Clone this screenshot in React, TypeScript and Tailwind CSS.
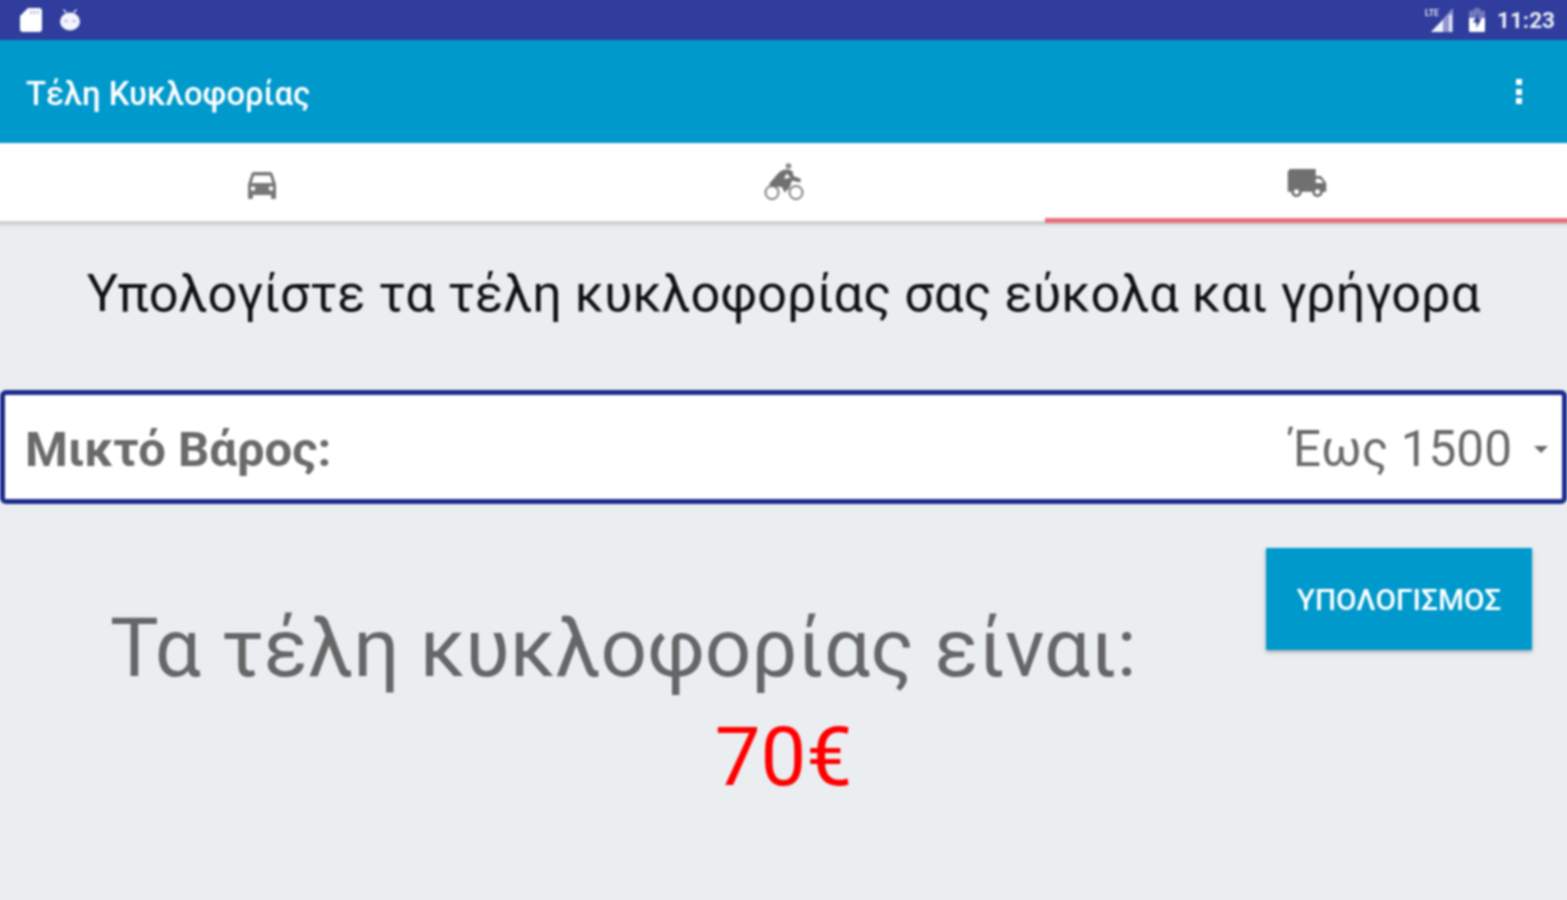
import { MdLocalShipping } from "react-icons/md";

function SdIcon() {
  return (
    <svg viewBox="0 0 22 24" className="h-[24px] w-[22px]" fill="#fff">
      <path d="M8 0h11a3 3 0 0 1 3 3v18a3 3 0 0 1-3 3H3a3 3 0 0 1-3-3V8z" />
      <path d="M10 2.500h1.500v3.500H10zM13.500 2.500H15v3.500h-1.500zM17 2.500h1.500v3.500H17z" fill="#aab0dc" />
    </svg>
  );
}

function BotIcon() {
  return (
    <svg viewBox="0 0 22 22" className="h-[22px] w-[22px]">
      <path d="M4.500 0.500 7.500 4M17.500 0.500 14.500 4" stroke="#d5d8f0" strokeWidth="1.600" />
      <ellipse cx="11" cy="12.500" rx="10" ry="9" fill="#f4f5fb" />
      <path d="M5 12h4M13 12h4" stroke="#a9aed8" strokeWidth="1.600" />
    </svg>
  );
}

function SignalIcon() {
  return (
    <svg viewBox="0 0 30 26" className="h-[26px] w-[30px]">
      <path d="M28 1v24H6z" fill="#8f96cf" />
      <path d="M18 13v12H6z" fill="#f2f3fa" />
      <path d="M24 8h3v17h-3z" fill="#e4e6f4" />
      <text x="0" y="9" fontSize="8.500" fontWeight="700" fill="#e4e6f4" fontFamily="Roboto, sans-serif">LTE</text>
    </svg>
  );
}

function BatteryIcon() {
  return (
    <svg viewBox="0 0 16 24" className="h-[24px] w-[16px]">
      <path d="M5 0h6v2.500h3.500A1.500 1.500 0 0 1 16 4v18.500a1.500 1.500 0 0 1-1.500 1.500h-13A1.500 1.500 0 0 1 0 22.500V4a1.500 1.500 0 0 1 1.500-1.500H5z" fill="#6f78bf" />
      <path d="M0 10h16v12.500a1.500 1.500 0 0 1-1.500 1.500h-13A1.500 1.500 0 0 1 0 22.500z" fill="#fff" />
      <path d="M9.500 5 4 14.500h3.500V20l5-9.500H9z" fill="#303d9c" />
    </svg>
  );
}

function CarIcon() {
  return (
    <svg viewBox="0 0 30 27" className="h-[27px] w-[30px]">
      <path
        d="M7 0h16c1.200 0 2.100.7 2.500 1.800L29 12.500V25.500a1.500 1.500 0 0 1-1.500 1.500h-2a1.500 1.500 0 0 1-1.500-1.500V23H6v2.500A1.500 1.500 0 0 1 4.500 27h-2A1.500 1.500 0 0 1 1 25.500V12.500L4.500 1.800C4.900.7 5.800 0 7 0z"
        fill="#777"
      />
      <path d="M7 3.500h16l2.300 7.500H4.700z" fill="#fff" />
      <circle cx="6" cy="16.500" r="2.300" fill="#fff" />
      <circle cx="24" cy="16.500" r="2.300" fill="#fff" />
    </svg>
  );
}

function BikeIcon() {
  return (
    <svg viewBox="0 0 40 38" className="h-[38px] w-[40px]">
      <circle cx="8" cy="29.500" r="6.500" fill="none" stroke="#808080" strokeWidth="2" />
      <circle cx="32" cy="29.500" r="6.500" fill="none" stroke="#808080" strokeWidth="2" />
      <circle cx="24.500" cy="3" r="2.800" fill="#888" />
      <path
        d="M5 21 14 10.500Q18 6 24 6.500L28.500 8 29.500 13 37 16 36 19.500 28 17.500 25.500 25 20.500 29.500 18 24 8 23.500z"
        fill="#707070"
      />
      <path d="M22.500 10.500 26.500 14.500 20 16z" fill="#fff" />
    </svg>
  );
}

export default function App() {
  return (
    <div className="h-[900px] w-[1567px] overflow-hidden bg-[#eaeef1]">
      <div className="ml-[-4px] mt-[-4px] flex h-[908px] w-[1575px] flex-col bg-[#eaeef1] font-['Roboto',sans-serif] blur-[0.8px]">
        <div className="flex h-[44px] items-center justify-between bg-[#303d9c] pl-[24px] pr-[16px] pt-[4px] text-white">
          <div className="flex items-center gap-[17px]">
            <SdIcon />
            <BotIcon />
          </div>
          <div className="flex items-center">
            <SignalIcon />
            <span className="ml-[14px]"><BatteryIcon /></span>
            <span className="ml-[12px] text-[22.500px] font-bold leading-none opacity-90">11:23</span>
          </div>
        </div>

        <div className="flex h-[103px] items-center justify-between bg-[#0099cc] pl-[30px] pr-[49px] text-white">
          <span className="pt-[6px] text-[32.800px] font-medium">Τέλη Κυκλοφορίας</span>
          <div className="flex flex-col gap-[3.500px]">
            <span className="h-[6px] w-[6px] bg-white" />
            <span className="h-[6px] w-[6px] bg-white" />
            <span className="h-[6px] w-[6px] bg-white" />
          </div>
        </div>

        <div className="grid h-[81px] grid-cols-3 border-b-[3px] border-[#cdd1d3] bg-white px-[4px] text-[#707070] shadow-[0_2px_2px_rgba(0,0,0,0.08)]">
          <div className="flex items-center justify-center pt-[6px] pl-[1px]">
            <CarIcon />
          </div>
          <div className="flex items-center justify-center pb-[1px] pl-[2px]">
            <BikeIcon />
          </div>
          <div className="mb-[-2px] mr-[-4px] flex items-center justify-center border-b-[5px] border-[#e8707a] pt-[4px] pr-[1px]">
            <MdLocalShipping className="h-[42px] w-[42px]" />
          </div>
        </div>

        <h1 className="mt-[37px] text-center text-[52.300px] font-normal leading-[64px] text-[#111]">
          Υπολογίστε τα τέλη κυκλοφορίας σας εύκολα και γρήγορα
        </h1>

        <div className="mx-[4px] mt-[65px] flex h-[114px] items-center justify-between rounded-[6px] border-[5px] border-[#1c2c8c] bg-white pl-[20px] pr-[14px] pt-[5px]">
          <span className="text-[49px] font-bold text-[#6a6a6a]">Μικτό Βάρος:</span>
          <div className="flex items-center gap-[22px]">
            <span className="text-[49.500px] text-[#6a6a6a]">Έως 1500</span>
            <span className="h-0 w-0 border-x-[7px] border-t-[7px] border-x-transparent border-t-[#666]" />
          </div>
        </div>

        <div className="mt-[44px] flex items-start justify-between pl-[114px] pr-[39px]">
          <p className="mt-[53px] text-[81.700px] leading-[95px] text-[#666]">Τα τέλη κυκλοφορίας είναι:</p>
          <button className="flex h-[102px] w-[266px] items-center justify-center bg-[#0099cc] pt-[3px] text-[29.800px] font-medium text-white shadow-[0_2px_4px_rgba(0,0,0,0.3)]">
            ΥΠΟΛΟΓΙΣΜΟΣ
          </button>
        </div>

        <p className="mt-[11px] text-center text-[81.500px] leading-[100px] text-[#ff0000]">70€</p>
      </div>
    </div>
  );
}
